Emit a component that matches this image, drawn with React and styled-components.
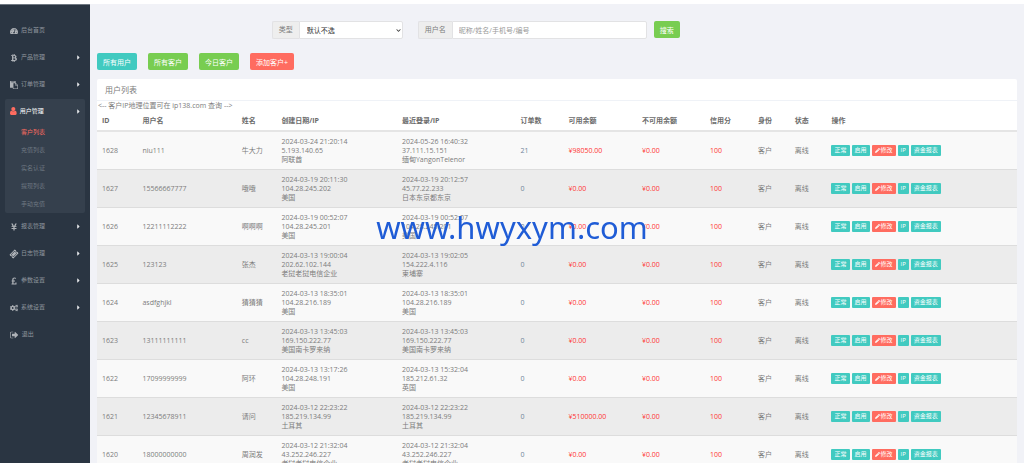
import { useState } from "react";
import styled, { createGlobalStyle } from "styled-components";
import {
  FaBtc,
  FaCaretRight,
  FaChevronDown,
  FaCogs,
  FaPencilAlt,
  FaPoundSign,
  FaTachometerAlt,
  FaTicketAlt,
  FaYenSign,
} from "react-icons/fa";

const GlobalStyle = createGlobalStyle`
  * {
    box-sizing: border-box;
  }

  html {
    scrollbar-width: none;
  }

  body {
    margin: 0;
    background: #f1f2f7;
    color: #7c7c7c;
    font-family: "Open Sans", "Noto Sans CJK SC", sans-serif;
    font-size: 7px;
    line-height: 9px;
  }

  button,
  input,
  select {
    font-family: inherit;
    font-size: 7px;
  }
`;

const TopBar = styled.header`
  height: 4px;
  background: #fff;
`;

const Layout = styled.div`
  display: flex;
  min-height: calc(100vh - 4px);
`;

const Sidebar = styled.nav`
  flex: 0 0 90px;
  padding: 12px 5px 0;
  background: #2a3542;
  border-top: 1px solid #6f7882;
`;

const Menu = styled.ul`
  margin: 0;
  padding: 0;
  list-style: none;
`;

const MenuGroup = styled.li`
  margin-top: ${({ $active }) => ($active ? "1px" : "0")};
  border-radius: 2px;
  background: ${({ $active }) => ($active ? "#35404d" : "transparent")};
`;

const MenuLink = styled.a`
  display: flex;
  align-items: center;
  gap: 3px;
  height: ${({ $active }) => ($active ? "24px" : "27px")};
  padding: 0 3px 0 5px;
  color: ${({ $active }) => ($active ? "#fff" : "#8f969e")};
  font-size: 6px;
  text-decoration: none;

  svg {
    width: auto;
    height: 8px;
    color: ${({ $active }) => ($active ? "#ff6c60" : "#aeb2b7")};
  }

  svg.tilted {
    transform: rotate(-45deg);
  }

  svg.caret {
    margin-left: auto;
    height: 7px;
    color: #e4e6e9;
  }
`;

const SubMenu = styled.ul`
  margin: 0;
  padding: 0 0 0 16px;
  list-style: none;
`;

const SubLink = styled.a`
  display: block;
  color: ${({ $active }) => ($active ? "#ff6c60" : "#6d7781")};
  font-size: 6px;
  line-height: 18px;
  text-decoration: none;
`;

const Main = styled.main`
  flex: 1;
  min-width: 0;
  padding: 17px 7px 0;
`;

const SearchForm = styled.form`
  display: flex;
  gap: 7px;
  margin-left: 19%;
`;

const InputGroup = styled.div`
  display: flex;
  height: 18px;
  margin-right: ${({ $spaced }) => ($spaced ? "8px" : "0")};
`;

const Addon = styled.label`
  padding: 0 6px;
  border: 1px solid #e2e2e4;
  border-right: 0;
  border-radius: 2px 0 0 2px;
  background: #eee;
  line-height: 16px;
`;

const SelectBox = styled.div`
  position: relative;
  display: flex;

  svg {
    position: absolute;
    top: 7px;
    right: 2px;
    width: 5px;
    height: 5px;
    color: #333;
    pointer-events: none;
  }
`;

const Select = styled.select`
  width: 104px;
  padding: 0 8px 0 7px;
  border: 1px solid #e2e2e4;
  border-radius: 0 2px 2px 0;
  background-color: #fff;
  color: #333;
  appearance: none;
`;

const Input = styled.input`
  width: 195px;
  padding: 0 6px;
  border: 1px solid #e2e2e4;
  border-radius: 0 2px 2px 0;
  background: #fff;
  color: #555;

  &::placeholder {
    color: #999;
  }
`;

const colors = {
  teal: "#41cac0",
  green: "#78cd51",
  red: "#ff6c60",
};

const Button = styled.button`
  height: 17px;
  padding: 0 6px;
  border: 0;
  border-radius: 2px;
  background: ${({ $color }) => colors[$color]};
  color: #fff;
  white-space: nowrap;
`;

const ButtonRow = styled.div`
  display: flex;
  gap: 11px;
  margin: 14px 0 9px;
`;

const Panel = styled.section`
  border-radius: 2px 2px 0 0;
  background: #fff;
`;

const PanelTitle = styled.h1`
  margin: 0;
  padding: 0 8px;
  border-bottom: 1px solid #eff2f7;
  font-size: 8px;
  font-weight: 400;
  line-height: 21px;
`;

const Note = styled.p`
  margin: 0;
  padding: 0 1px;
  line-height: 10px;
`;

const Table = styled.table`
  width: 100%;
  table-layout: fixed;
  border-spacing: 0;

  th {
    height: 21px;
    padding: 0 5px;
    border-bottom: 2px solid #e5e5e5;
    color: #6b6b6b;
    font-weight: 700;
    text-align: left;
  }

  td {
    height: 38px;
    padding: 0 5px;
    border-bottom: 1px solid #ddd;
    white-space: nowrap;
  }

  tbody tr:nth-child(odd) {
    background: #f9f9f9;
  }

  tbody tr:nth-child(even) {
    background: #ececec;
  }
`;

const Column = styled.col`
  width: ${({ $width }) => $width};
`;

const Red = styled.span`
  color: #ff3333;
`;

const OrderLink = styled.a`
  color: #70849a;
  text-decoration: none;
`;

const Actions = styled.div`
  display: flex;
  gap: 2px;
`;

const Tag = styled.button`
  display: flex;
  align-items: center;
  gap: 1px;
  height: 11px;
  padding: 0 3px;
  border: 0;
  border-radius: 1px;
  background: ${({ $color }) => colors[$color]};
  color: #fff;
  font-size: 6px;
  line-height: 11px;

  svg {
    width: 5px;
    height: 5px;
  }
`;

const Watermark = styled.div`
  position: fixed;
  top: 49%;
  left: 50%;
  transform: translate(-50%, -50%);
  color: #1f5cd6;
  font-family: "Noto Sans", sans-serif;
  font-size: 31px;
  line-height: 40px;
  pointer-events: none;
`;

const PasteIcon = () => (
  <svg viewBox="0 0 1792 1792" fill="currentColor">
    <path d="M768 1664h896v-640h-416q-40 0-68-28t-28-68v-416h-384v1152zm256-1440v-64q0-13-9.5-22.5t-22.5-9.5h-704q-13 0-22.5 9.5t-9.5 22.5v64q0 13 9.5 22.5t22.5 9.5h704q13 0 22.5-9.5t9.5-22.5zm256 672h299l-299-299v299zm512 128v672q0 40-28 68t-68 28h-960q-40 0-68-28t-28-68v-160h-544q-40 0-68-28t-28-68v-1344q0-40 28-68t68-28h1088q40 0 68 28t28 68v328q21 13 36 28l408 408q28 28 48 76t20 88z" />
  </svg>
);

const UserIcon = () => (
  <svg viewBox="256 128 1280 1536" fill="currentColor">
    <path d="M1536 1399q0 109-62.5 187t-150.5 78h-854q-88 0-150.5-78t-62.5-187q0-85 8.5-160.5t31.5-152 58.5-131 94-89 134.5-34.5q131 128 313 128t313-128q76 0 134.5 34.5t94 89 58.5 131 31.5 152 8.5 160.5zm-256-887q0 159-112.5 271.5t-271.5 112.5-271.5-112.5-112.5-271.5 112.5-271.5 271.5-112.5 271.5 112.5 112.5 271.5z" />
  </svg>
);

const TicketIcon = () => <FaTicketAlt className="tilted" />;

const SignOutIcon = () => (
  <svg viewBox="0 128 1664 1536" fill="currentColor">
    <path d="M640 1440q0 4 1 20t.5 26.5-3 23.5-10 19.5-20.5 6.5h-320q-119 0-203.5-84.5t-84.5-203.5v-704q0-119 84.5-203.5t203.5-84.5h320q13 0 22.5 9.5t9.5 22.5q0 4 1 20t.5 26.5-3 23.5-10 19.5-20.5 6.5h-320q-66 0-113 47t-47 113v704q0 66 47 113t113 47h312l11.5 1 11.5 3 8 5.5 7 9 2 13.5zm928-544q0 26-19 45l-544 544q-19 19-45 19t-45-19-19-45v-288h-448q-26 0-45-19t-19-45v-384q0-26 19-45t45-19h448v-288q0-26 19-45t45-19 45 19l544 544q19 19 19 45z" />
  </svg>
);

const menus = [
  { name: "后台首页", icon: FaTachometerAlt, leaf: true },
  { name: "产品管理", icon: FaBtc },
  { name: "订单管理", icon: PasteIcon },
  {
    name: "用户管理",
    icon: UserIcon,
    children: ["客户列表", "充值列表", "实名认证", "提现列表", "手动充值"],
  },
  { name: "报表管理", icon: FaYenSign },
  { name: "日志管理", icon: TicketIcon },
  { name: "参数设置", icon: FaPoundSign },
  { name: "系统设置", icon: FaCogs },
  { name: "退出", icon: SignOutIcon, leaf: true },
];

const columns = [
  { title: "ID", width: "4.4%" },
  { title: "用户名", width: "10.8%" },
  { title: "姓名", width: "4.3%" },
  { title: "创建日期/IP", width: "13.1%" },
  { title: "最近登录/IP", width: "12.9%" },
  { title: "订单数", width: "5.2%" },
  { title: "可用余额", width: "8%" },
  { title: "不可用余额", width: "7.4%" },
  { title: "信用分", width: "5.2%" },
  { title: "身份", width: "4%" },
  { title: "状态", width: "4%" },
  { title: "操作", width: "20.7%" },
];

const users = [
  {
    id: 1628,
    account: "niu111",
    name: "牛大力",
    created: ["2024-03-24 21:20:14", "5.193.140.65", "阿联酋"],
    login: ["2024-05-26 16:40:32", "37.111.15.151", "缅甸YangonTelenor"],
    orders: 21,
    balance: "98050.00",
  },
  {
    id: 1627,
    account: "15566667777",
    name: "哦哦",
    created: ["2024-03-19 20:11:30", "104.28.245.202", "美国"],
    login: ["2024-03-19 20:12:57", "45.77.22.233", "日本东京都东京"],
    orders: 0,
    balance: "0.00",
  },
  {
    id: 1626,
    account: "12211112222",
    name: "啊啊啊",
    created: ["2024-03-19 00:52:07", "104.28.245.201", "美国"],
    login: ["2024-03-19 00:52:07", "104.28.245.201", "美国"],
    orders: 0,
    balance: "0.00",
  },
  {
    id: 1625,
    account: "123123",
    name: "张杰",
    created: ["2024-03-13 19:00:04", "202.62.102.144", "老挝老挝电信企业"],
    login: ["2024-03-13 19:02:05", "154.222.4.116", "柬埔寨"],
    orders: 0,
    balance: "0.00",
  },
  {
    id: 1624,
    account: "asdfghjkl",
    name: "猜猜猜",
    created: ["2024-03-13 18:35:01", "104.28.216.189", "美国"],
    login: ["2024-03-13 18:35:01", "104.28.216.189", "美国"],
    orders: 0,
    balance: "0.00",
  },
  {
    id: 1623,
    account: "13111111111",
    name: "cc",
    created: ["2024-03-13 13:45:03", "169.150.222.77", "美国南卡罗来纳"],
    login: ["2024-03-13 13:45:03", "169.150.222.77", "美国南卡罗来纳"],
    orders: 0,
    balance: "0.00",
  },
  {
    id: 1622,
    account: "17099999999",
    name: "阿环",
    created: ["2024-03-13 13:17:26", "104.28.248.191", "美国"],
    login: ["2024-03-13 15:32:04", "185.212.61.32", "英国"],
    orders: 0,
    balance: "0.00",
  },
  {
    id: 1621,
    account: "12345678911",
    name: "请问",
    created: ["2024-03-12 22:23:22", "185.219.134.99", "土耳其"],
    login: ["2024-03-12 22:23:22", "185.219.134.99", "土耳其"],
    orders: 0,
    balance: "510000.00",
  },
  {
    id: 1620,
    account: "18000000000",
    name: "周润发",
    created: ["2024-03-12 21:32:04", "43.252.246.227", "老挝老挝电信企业"],
    login: ["2024-03-12 21:32:04", "43.252.246.227", "老挝老挝电信企业"],
    orders: 0,
    balance: "0.00",
  },
];

const SideMenu = () => (
  <Sidebar>
    <Menu>
      {menus.map(({ name, icon: Icon, leaf, children }) => (
        <MenuGroup key={name} $active={!!children}>
          <MenuLink href="#" $active={!!children}>
            <Icon />
            {name}
            {!leaf && <FaCaretRight className="caret" />}
          </MenuLink>
          {children && (
            <SubMenu>
              {children.map((child, i) => (
                <li key={child}>
                  <SubLink href="#" $active={i === 0}>
                    {child}
                  </SubLink>
                </li>
              ))}
            </SubMenu>
          )}
        </MenuGroup>
      ))}
    </Menu>
  </Sidebar>
);

const Search = () => {
  const [type, setType] = useState("");
  const [keyword, setKeyword] = useState("");

  return (
    <SearchForm onSubmit={(e) => e.preventDefault()}>
      <InputGroup $spaced>
        <Addon htmlFor="type">类型</Addon>
        <SelectBox>
          <Select
            id="type"
            value={type}
            onChange={(e) => setType(e.target.value)}
          >
            <option value="">默认不选</option>
          </Select>
          <FaChevronDown />
        </SelectBox>
      </InputGroup>
      <InputGroup>
        <Addon htmlFor="keyword">用户名</Addon>
        <Input
          id="keyword"
          type="text"
          placeholder="昵称/姓名/手机号/编号"
          value={keyword}
          onChange={(e) => setKeyword(e.target.value)}
        />
      </InputGroup>
      <Button type="submit" $color="green">
        搜索
      </Button>
    </SearchForm>
  );
};

const Lines = ({ items }) => items.map((item, i) => <div key={i}>{item}</div>);

const UserRow = ({ user }) => (
  <tr>
    <td>{user.id}</td>
    <td>{user.account}</td>
    <td>{user.name}</td>
    <td>
      <Lines items={user.created} />
    </td>
    <td>
      <Lines items={user.login} />
    </td>
    <td>
      <OrderLink href="#">{user.orders}</OrderLink>
    </td>
    <td>
      <Red>¥{user.balance}</Red>
    </td>
    <td>
      <Red>¥0.00</Red>
    </td>
    <td>
      <Red>100</Red>
    </td>
    <td>客户</td>
    <td>离线</td>
    <td>
      <Actions>
        <Tag type="button" $color="teal">
          正常
        </Tag>
        <Tag type="button" $color="teal">
          启用
        </Tag>
        <Tag type="button" $color="red">
          <FaPencilAlt />
          修改
        </Tag>
        <Tag type="button" $color="teal">
          IP
        </Tag>
        <Tag type="button" $color="teal">
          资金报表
        </Tag>
      </Actions>
    </td>
  </tr>
);

export default function App() {
  return (
    <>
      <GlobalStyle />
      <TopBar />
      <Layout>
        <SideMenu />
        <Main>
          <Search />
          <ButtonRow>
            <Button type="button" $color="teal">
              所有用户
            </Button>
            <Button type="button" $color="green">
              所有客户
            </Button>
            <Button type="button" $color="green">
              今日客户
            </Button>
            <Button type="button" $color="red">
              添加客户+
            </Button>
          </ButtonRow>
          <Panel>
            <PanelTitle>用户列表</PanelTitle>
            <Note>{"<-- 客户IP地理位置可在 ip138.com 查询 -->"}</Note>
            <Table>
              <colgroup>
                {columns.map((column) => (
                  <Column key={column.title} $width={column.width} />
                ))}
              </colgroup>
              <thead>
                <tr>
                  {columns.map((column) => (
                    <th key={column.title}>{column.title}</th>
                  ))}
                </tr>
              </thead>
              <tbody>
                {users.map((user) => (
                  <UserRow key={user.id} user={user} />
                ))}
              </tbody>
            </Table>
          </Panel>
        </Main>
      </Layout>
      <Watermark>www.hwyxym.com</Watermark>
    </>
  );
}
